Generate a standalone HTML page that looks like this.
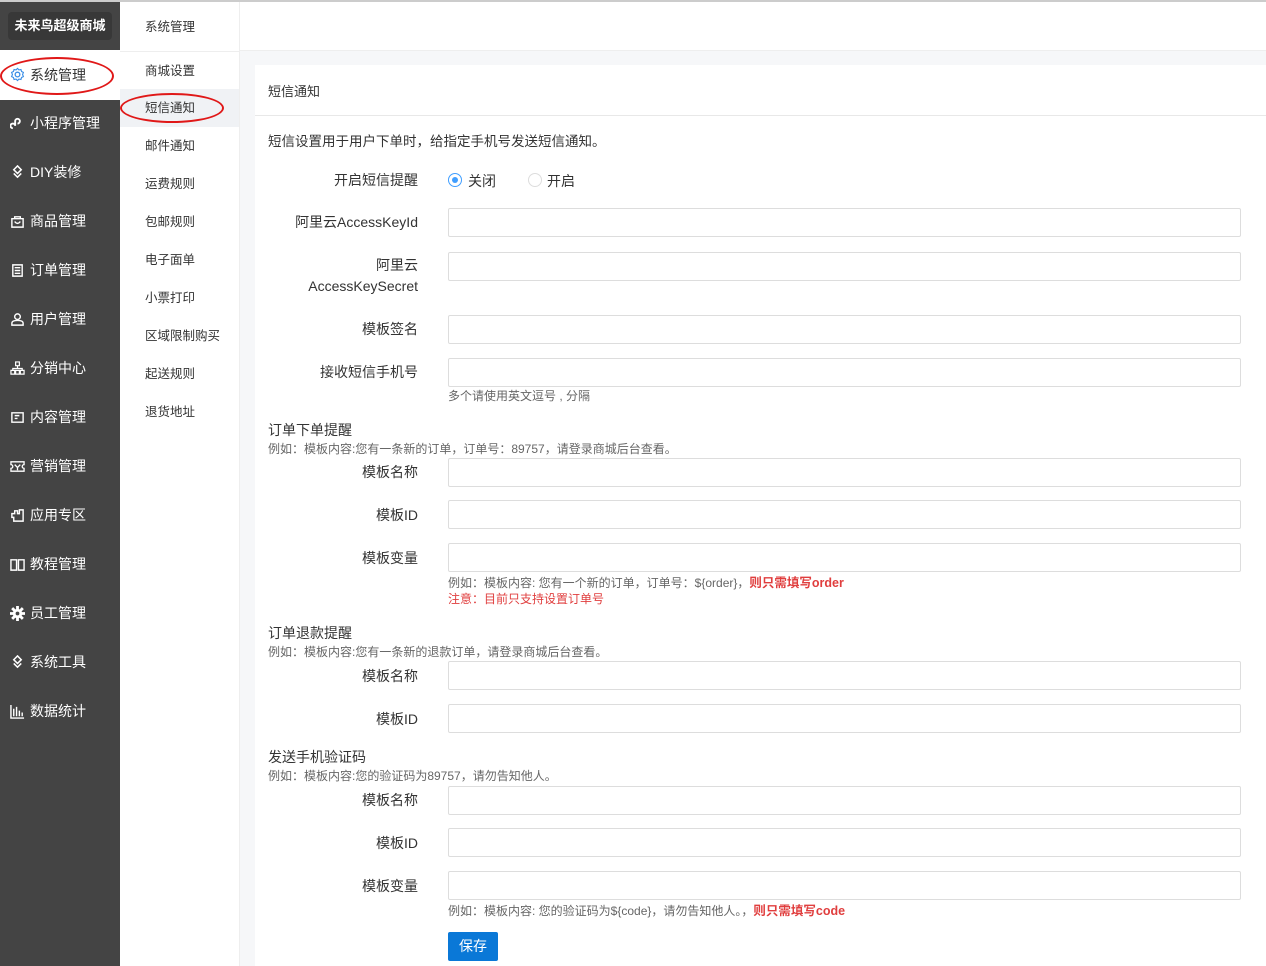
<!DOCTYPE html>
<html><head><meta charset="utf-8"><style>
*{margin:0;padding:0;box-sizing:border-box}
body{width:1266px;height:966px;overflow:hidden;font-family:"Liberation Sans","Noto Sans CJK SC",sans-serif;background:#f6f7f9;position:relative;color:#333}
.a{position:absolute;white-space:nowrap}
#side{position:absolute;left:0;top:0;width:120px;height:966px;background:#444}
#logo{position:absolute;left:8px;top:12px;width:104px;height:28px;background:#383838;border-radius:4px;color:#fff;font-size:13px;font-weight:bold;line-height:28px;text-align:center}
.si{position:absolute;left:0;width:120px;height:49px;color:#fff;font-size:14px;line-height:49px;padding-left:30px}
.si svg{position:absolute;left:10px;top:17px;width:15px;height:15px}
#sub{position:absolute;left:120px;top:0;width:120px;height:966px;background:#fff;border-right:1px solid #eee}
.mi{position:absolute;left:0;width:119px;height:38px;line-height:38px;padding-left:25px;font-size:12.5px;color:#333}
#top{position:absolute;left:240px;top:0;width:1026px;height:51px;background:#fff;border-bottom:1px solid #eee}
#card{position:absolute;left:255px;top:65px;width:1011px;height:901px;background:#fff}
.lb{position:absolute;right:848px;font-size:14px;color:#333;text-align:right;white-space:nowrap;margin-top:-1px}
.in{position:absolute;left:448px;width:793px;height:29px;border:1px solid #ddd;border-radius:2px;background:#fff}
.h{position:absolute;left:268px;font-size:14px;color:#333;white-space:nowrap}
.t{position:absolute;font-size:12px;color:#666;white-space:nowrap;margin-top:-2px}
.r{color:#e03e3e;font-weight:bold;font-size:12.5px}
</style></head><body>
<div style="position:absolute;left:0;top:0;width:1266px;height:2px;background:#ccc;z-index:5"></div>
<div id="side">
<div id="logo">未来鸟超级商城</div>
<div class="si" style="top:50px;height:50px;background:#fff;color:#333;line-height:50px"><svg viewBox="0 0 16 16" style="top:17px"><circle cx="8" cy="8" r="2.5" fill="none" stroke="#3a8ee6" stroke-width="1.4"/><path d="M8 1.5l1.5 1.6 2.2-.4.6 2.1 2 1-.9 2.2.9 2.2-2 1-.6 2.1-2.2-.4L8 14.5l-1.5-1.6-2.2.4-.6-2.1-2-1 .9-2.2-.9-2.2 2-1 .6-2.1 2.2.4z" fill="none" stroke="#3a8ee6" stroke-width="1.2"/></svg>系统管理</div>
<div class="si" style="top:99px"><svg viewBox="0 0 16 16"><path d="M3 13a2.5 2.5 0 1 1 2.5-2.5V5.5A2.5 2.5 0 1 1 8 8" fill="none" stroke="#fff" stroke-width="2"/></svg>小程序管理</div>
<div class="si" style="top:148px"><svg viewBox="0 0 16 16"><path d="M8 1l4 4-4 4-4-4zM4 9l4 4 4-4" fill="none" stroke="#fff" stroke-width="1.6"/></svg>DIY装修</div>
<div class="si" style="top:197px"><svg viewBox="0 0 16 16"><path d="M2 5h12v9H2zM5 5V3h6v2M5 8q3 4 6 0" fill="none" stroke="#fff" stroke-width="1.5"/></svg>商品管理</div>
<div class="si" style="top:246px"><svg viewBox="0 0 16 16"><path d="M3 2h10v12H3zM5 5h6M5 8h6M5 11h6" fill="none" stroke="#fff" stroke-width="1.5"/></svg>订单管理</div>
<div class="si" style="top:295px"><svg viewBox="0 0 16 16"><circle cx="8" cy="5" r="3" fill="none" stroke="#fff" stroke-width="1.5"/><path d="M2 14v-2q0-3 6-3t6 3v2z" fill="none" stroke="#fff" stroke-width="1.5"/></svg>用户管理</div>
<div class="si" style="top:344px"><svg viewBox="0 0 16 16"><path d="M6 1h4v4H6zM1 10h4v4H1zM6 10h4v4H6zM11 10h4v4h-4zM8 5v3M3 10V8h10v2" fill="none" stroke="#fff" stroke-width="1.3"/></svg>分销中心</div>
<div class="si" style="top:393px"><svg viewBox="0 0 16 16"><path d="M2 3h12v10H2zM5 6h5M5 9h3" fill="none" stroke="#fff" stroke-width="1.5"/></svg>内容管理</div>
<div class="si" style="top:442px"><svg viewBox="0 0 16 16"><path d="M1 3h14v3a2 2 0 0 0 0 4v3H1v-3a2 2 0 0 0 0-4zM5 6l3 3 3-3M8 9v3" fill="none" stroke="#fff" stroke-width="1.4"/></svg>营销管理</div>
<div class="si" style="top:491px"><svg viewBox="0 0 16 16"><path d="M2 6h3V3h3v3h2V2h4v12H4v-4H2z" fill="none" stroke="#fff" stroke-width="1.5"/></svg>应用专区</div>
<div class="si" style="top:540px"><svg viewBox="0 0 16 16"><path d="M1 3h6v11H1zM9 3h6v11H9z" fill="none" stroke="#fff" stroke-width="1.5"/></svg>教程管理</div>
<div class="si" style="top:589px"><svg viewBox="0 0 16 16"><circle cx="8" cy="8" r="5" fill="#fff"/><path d="M8 0v16M0 8h16M2.3 2.3l11.4 11.4M13.7 2.3L2.3 13.7" stroke="#fff" stroke-width="3"/><circle cx="8" cy="8" r="2" fill="#444"/></svg>员工管理</div>
<div class="si" style="top:638px"><svg viewBox="0 0 16 16"><path d="M8 1l4 4-4 4-4-4zM4 9l4 4 4-4" fill="none" stroke="#fff" stroke-width="1.6"/></svg>系统工具</div>
<div class="si" style="top:687px"><svg viewBox="0 0 16 16"><path d="M1 1v14h14M4 13V5M7 13V3M10 13V7M13 13V9" fill="none" stroke="#fff" stroke-width="1.5"/></svg>数据统计</div>
</div>
<div id="sub">
<div class="mi" style="top:8px;height:38px">系统管理</div>
<div style="position:absolute;left:0;top:51px;width:119px;height:1px;background:#eee"></div>
<div class="mi" style="top:52px">商城设置</div>
<div class="mi" style="top:89px;background:#f0f2f5">短信通知</div>
<div class="mi" style="top:127px">邮件通知</div>
<div class="mi" style="top:165px">运费规则</div>
<div class="mi" style="top:203px">包邮规则</div>
<div class="mi" style="top:241px">电子面单</div>
<div class="mi" style="top:279px">小票打印</div>
<div class="mi" style="top:317px">区域限制购买</div>
<div class="mi" style="top:355px">起送规则</div>
<div class="mi" style="top:393px">退货地址</div>
</div>
<div id="top"></div>
<div id="card"></div>
<div style="position:absolute;left:255px;top:115px;width:1011px;height:1px;background:#e8e8e8"></div>
<div class="h" style="top:81px;font-size:13px">短信通知</div>
<div class="h" style="top:130px;font-size:13.5px">短信设置用于用户下单时，给指定手机号发送短信通知。</div>
<div class="lb" style="top:171px">开启短信提醒</div>
<div class="a" style="left:448px;top:173px;width:14px;height:14px;border-radius:50%;border:1px solid #409eff;background:#fff"><div style="position:absolute;left:3px;top:3px;width:6px;height:6px;border-radius:50%;background:#409eff"></div></div>
<div class="a" style="left:468px;top:171px;font-size:14px">关闭</div>
<div class="a" style="left:528px;top:173px;width:14px;height:14px;border-radius:50%;border:1px solid #ddd"></div>
<div class="a" style="left:547px;top:171px;font-size:14px">开启</div>
<div class="lb" style="top:213px">阿里云AccessKeyId</div><div class="in" style="top:208px"></div>
<div class="lb" style="top:256px;line-height:21px">阿里云<br>AccessKeySecret</div><div class="in" style="top:252px"></div>
<div class="lb" style="top:320px">模板签名</div><div class="in" style="top:315px"></div>
<div class="lb" style="top:363px">接收短信手机号</div><div class="in" style="top:358px"></div>
<div class="t" style="left:448px;top:389px">多个请使用英文逗号 , 分隔</div>
<div class="h" style="top:420px">订单下单提醒</div>
<div class="t" style="left:268px;top:442px">例如：模板内容:您有一条新的订单，订单号：89757，请登录商城后台查看。</div>
<div class="lb" style="top:463px">模板名称</div><div class="in" style="top:458px"></div>
<div class="lb" style="top:506px">模板ID</div><div class="in" style="top:500px"></div>
<div class="lb" style="top:549px">模板变量</div><div class="in" style="top:543px"></div>
<div class="t" style="left:448px;top:574px">例如：模板内容: 您有一个新的订单，订单号：${order}，<span class="r">则只需填写order</span></div>
<div class="t r" style="left:448px;top:592px;font-weight:normal;font-size:12px">注意：目前只支持设置订单号</div>
<div class="h" style="top:623px">订单退款提醒</div>
<div class="t" style="left:268px;top:645px">例如：模板内容:您有一条新的退款订单，请登录商城后台查看。</div>
<div class="lb" style="top:667px">模板名称</div><div class="in" style="top:661px"></div>
<div class="lb" style="top:710px">模板ID</div><div class="in" style="top:704px"></div>
<div class="h" style="top:747px">发送手机验证码</div>
<div class="t" style="left:268px;top:769px">例如：模板内容:您的验证码为89757，请勿告知他人。</div>
<div class="lb" style="top:791px">模板名称</div><div class="in" style="top:786px"></div>
<div class="lb" style="top:834px">模板ID</div><div class="in" style="top:828px"></div>
<div class="lb" style="top:877px">模板变量</div><div class="in" style="top:871px"></div>
<div class="t" style="left:448px;top:902px">例如：模板内容: 您的验证码为${code}，请勿告知他人。，<span class="r">则只需填写code</span></div>
<div class="a" style="left:448px;top:932px;width:50px;height:29px;background:#0a78d7;border-radius:2px;color:#fff;font-size:14px;line-height:29px;text-align:center">保存</div>
<div class="a" style="left:0;top:57px;width:114px;height:38px;border:2px solid #e01818;border-radius:50%"></div>
<div class="a" style="left:120px;top:93px;width:104px;height:30px;border:2px solid #e01818;border-radius:50%"></div>
</body></html>
